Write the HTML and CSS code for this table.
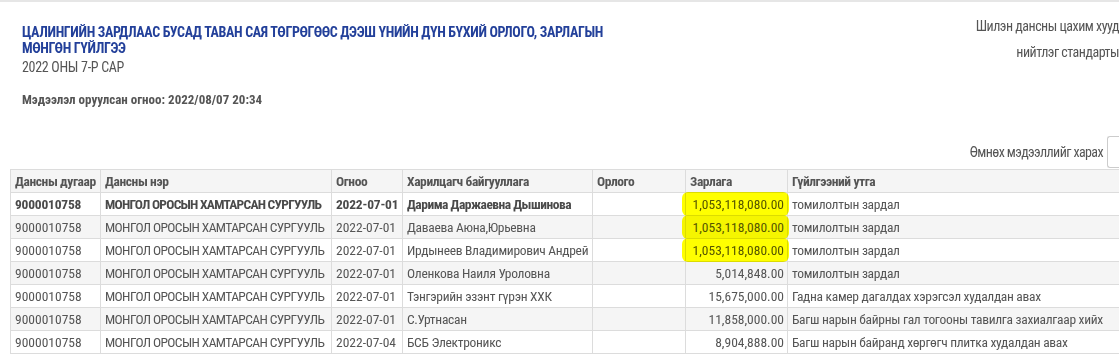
FILE: index.html
```html
<!DOCTYPE html>
<html lang="mn">
<head>
<meta charset="utf-8">
<link rel="stylesheet" href="styles.css">
</head>
<body>
<div class="page">
  <header class="top">
    <div class="titles">
      <h1 class="title">ЦАЛИНГИЙН ЗАРДЛААС БУСАД ТАВАН САЯ ТӨГРӨГӨӨС ДЭЭШ ҮНИЙН ДҮН БҮХИЙ ОРЛОГО, ЗАРЛАГЫН МӨНГӨН ГҮЙЛГЭЭ</h1>
      <div class="period">2022 ОНЫ 7-Р САР</div>
      <div class="updated">Мэдээлэл оруулсан огноо: 2022/08/07 20:34</div>
    </div>
    <div class="law">
      <div class="law-line">Шилэн дансны цахим хууд</div>
      <div class="law-line">нийтлэг стандарты</div>
    </div>
  </header>
  <div class="filter">
    <span class="filter-label">Өмнөх мэдээллийг харах</span>
    <span class="filter-box"></span>
  </div>
  <table class="grid">
    <colgroup>
      <col class="c1"><col class="c2"><col class="c3"><col class="c4"><col class="c5"><col class="c6"><col class="c7">
    </colgroup>
    <thead>
      <tr><th>Дансны дугаар</th><th>Дансны нэр</th><th>Огноо</th><th>Харилцагч байгууллага</th><th>Орлого</th><th>Зарлага</th><th>Гүйлгээний утга</th></tr>
    </thead>
    <tbody>
      <tr class="bold"><td class="dig">9000010758</td><td class="caps">МОНГОЛ ОРОСЫН ХАМТАРСАН СУРГУУЛЬ</td><td class="dig">2022-07-01</td><td>Дарима Даржаевна Дышинова</td><td></td><td class="num mark">1,053,118,080.00</td><td class="plain">томилолтын зардал</td></tr>
      <tr><td class="dig">9000010758</td><td class="caps">МОНГОЛ ОРОСЫН ХАМТАРСАН СУРГУУЛЬ</td><td class="dig">2022-07-01</td><td>Даваева Аюна,Юрьевна</td><td></td><td class="num mark">1,053,118,080.00</td><td>томилолтын зардал</td></tr>
      <tr><td class="dig">9000010758</td><td class="caps">МОНГОЛ ОРОСЫН ХАМТАРСАН СУРГУУЛЬ</td><td class="dig">2022-07-01</td><td>Ирдынеев Владимирович Андрей</td><td></td><td class="num mark">1,053,118,080.00</td><td>томилолтын зардал</td></tr>
      <tr><td class="dig">9000010758</td><td class="caps">МОНГОЛ ОРОСЫН ХАМТАРСАН СУРГУУЛЬ</td><td class="dig">2022-07-01</td><td>Оленкова Наиля Уроловна</td><td></td><td class="num">5,014,848.00</td><td>томилолтын зардал</td></tr>
      <tr><td class="dig">9000010758</td><td class="caps">МОНГОЛ ОРОСЫН ХАМТАРСАН СУРГУУЛЬ</td><td class="dig">2022-07-01</td><td>Тэнгэрийн эзэнт гүрэн ХХК</td><td></td><td class="num">15,675,000.00</td><td>Гадна камер дагалдах хэрэгсэл худалдан авах</td></tr>
      <tr><td class="dig">9000010758</td><td class="caps">МОНГОЛ ОРОСЫН ХАМТАРСАН СУРГУУЛЬ</td><td class="dig">2022-07-01</td><td>С.Уртнасан</td><td></td><td class="num">11,858,000.00</td><td>Багш нарын байрны гал тогооны тавилга захиалгаар хийх</td></tr>
      <tr><td class="dig">9000010758</td><td class="caps">МОНГОЛ ОРОСЫН ХАМТАРСАН СУРГУУЛЬ</td><td class="dig">2022-07-04</td><td>БСБ Электроникс</td><td></td><td class="num">8,904,888.00</td><td>Багш нарын байранд хөргөгч плитка худалдан авах</td></tr>
    </tbody>
  </table>
</div>
</body>
</html>
```

FILE: styles.css
```css
* { box-sizing: border-box; }
html, body { margin: 0; padding: 0; background: #fff; }
body {
  width: 1119px;
  height: 354px;
  overflow: hidden;
  font-family: "Roboto Condensed", "DejaVu Sans Condensed", sans-serif;
  color: #555;
  font-size: 13.5px;
}
.page {
  border-top: 2px solid #e6e6e6;
  padding: 0 0 0 10px;
  width: 1119px;
}
.top {
  display: flex;
  justify-content: space-between;
  align-items: flex-start;
}
.titles {
  padding: 22px 0 0 12px;
  width: 610px;
}
.title {
  margin: 0;
  font-size: 14px;
  line-height: 16px;
  font-weight: bold;
  letter-spacing: -0.35px;
  color: #23409a;
}
.period {
  font-size: 14px;
  line-height: 18px;
  margin-top: 2px;
  letter-spacing: -0.3px;
}
.updated {
  margin-top: 15px;
  font-size: 13px;
  font-weight: bold;
  line-height: 18px;
}
.law {
  padding-top: 11px;
  text-align: right;
  white-space: nowrap;
  letter-spacing: -0.5px;
}
.law-line {
  line-height: 26px;
  font-size: 14px;
}
.filter {
  display: flex;
  justify-content: flex-end;
  align-items: center;
  gap: 4px;
  margin-top: 27px;
  height: 32px;
}
.filter-label { font-size: 14px; letter-spacing: -0.6px; }
.filter-box {
  width: 12px;
  height: 32px;
  border: 1px solid #ccc;
  border-right: none;
  border-radius: 3px 0 0 3px;
}
.grid {
  margin-top: 1px;
  border-collapse: collapse;
  table-layout: fixed;
  width: 1140px;
}
.c1 { width: 90px; }
.c2 { width: 231px; }
.c3 { width: 71px; }
.c4 { width: 190px; }
.c5 { width: 93px; }
.c6 { width: 102px; }
.c7 { width: 363px; }
.grid th, .grid td {
  border: 1px solid #dcdcdc;
  height: 23px;
  padding: 0 2px 0 4px;
  text-align: left;
  white-space: nowrap;
  overflow: hidden;
  line-height: 21px;
}
.grid td { letter-spacing: -0.3px; }
.grid th {
  background: #f5f5f5;
  font-weight: bold;
  color: #555;
  letter-spacing: -0.4px;
}
.grid tbody tr:nth-child(even) td { background: #f5f5f5; }
.grid td.dig { letter-spacing: 0; }
.grid td.caps { letter-spacing: -0.6px; }
.grid tr.bold td { font-weight: bold; letter-spacing: -0.5px; color: #4a4a4a; }
.grid tr.bold td.dig { letter-spacing: -0.2px; }
.grid tr.bold td.caps { letter-spacing: -0.75px; }
.grid td.num { text-align: right; padding-right: 3px; letter-spacing: 0; }
.grid tr.bold td.num,
.grid tr.bold td.plain { font-weight: normal; color: #555; }
.grid tr.bold td.num { letter-spacing: 0; }
.grid tr.bold td.plain { letter-spacing: -0.3px; }
.grid td.mark { position: relative; overflow: visible; }
.grid td.mark::after {
  content: "";
  position: absolute;
  left: -4px;
  right: -2px;
  top: -1px;
  bottom: -1px;
  background: #ffff00;
  border-radius: 6px;
  mix-blend-mode: multiply;
}
```
